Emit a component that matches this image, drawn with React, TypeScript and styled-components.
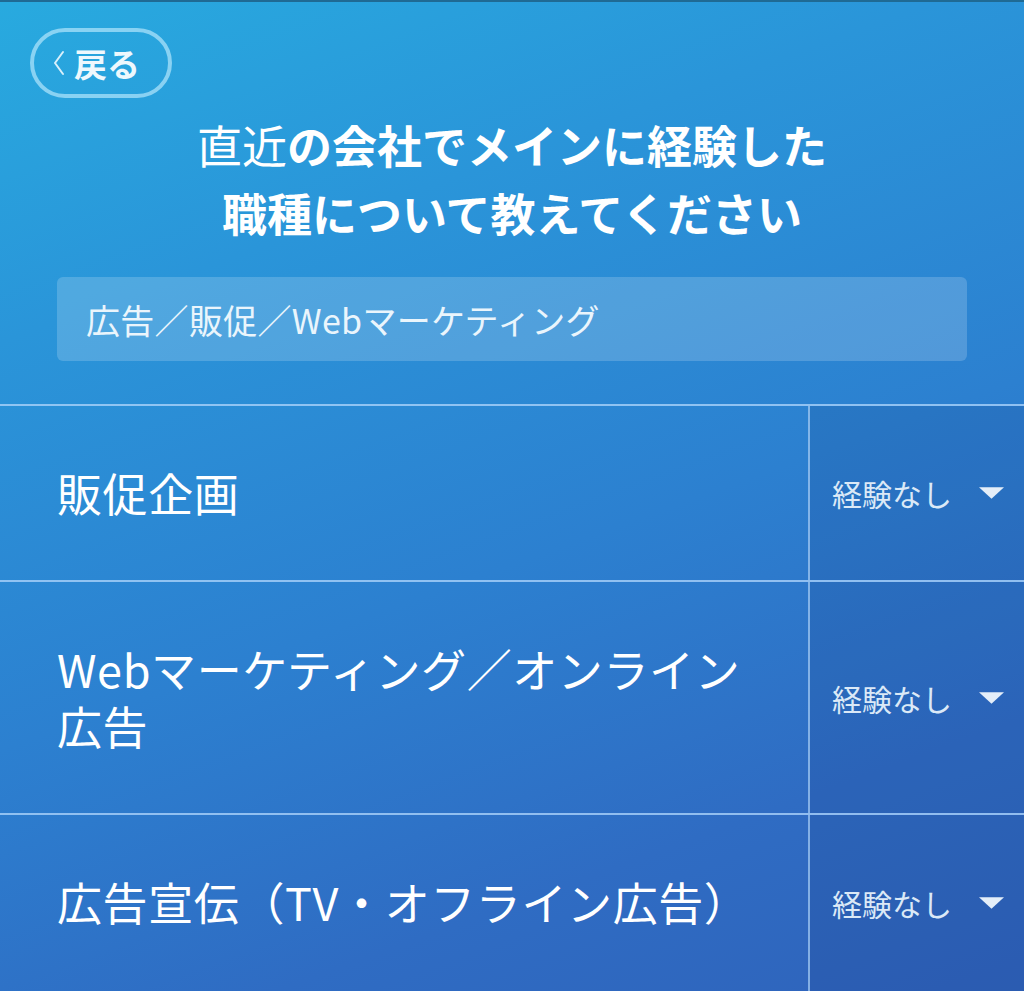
import styled, { createGlobalStyle } from 'styled-components'

const GlobalStyle = createGlobalStyle`
	html, body {
		margin: 0;
		padding: 0;
		background: #2d5fb8;
	}
	body {
		font-family: 'Noto Sans CJK JP', 'Noto Sans', sans-serif;
	}
`

const experiencias = [
	{ id: 1, nombre: '販促企画' },
	{ id: 2, nombre: 'Webマーケティング／オンライン広告' },
	{ id: 3, nombre: '広告宣伝（TV・オフライン広告）' },
]

export default function App() {
	return (
		<>
			<GlobalStyle />
			<Pagina>
				<Cabecera>
					<BotonVolver type='button'>
						<Chevron viewBox='0 0 14 28' aria-hidden>
							<path d='M11 3 L3 14 L11 25' />
						</Chevron>
						戻る
					</BotonVolver>
					<Titulo>
						<Ligero>直近</Ligero>の会社でメインに経験した
						<br />
						職種について教えてください
					</Titulo>
					<Categoria>広告／販促／Webマーケティング</Categoria>
				</Cabecera>

				<Lista>
					{experiencias.map(item => (
						<Fila key={item.id}>
							<Etiqueta>{item.nombre}</Etiqueta>
							<Selector>
								<span>経験なし</span>
								<Triangulo viewBox='0 0 26 12' aria-hidden>
									<path d='M0 0 H26 L13 12 Z' />
								</Triangulo>
							</Selector>
						</Fila>
					))}
				</Lista>
			</Pagina>
		</>
	)
}

const Pagina = styled.div`
	min-height: 991px;
	display: flex;
	flex-direction: column;
	border-top: 2px solid #1f6a94;
	box-sizing: border-box;
	background: linear-gradient(160deg, #28aadf 0%, #2a95d9 25%, #2c80d0 55%, #2f6cc3 80%, #2f63bb 100%);
	color: #fff;
	overflow: hidden;
`

const Cabecera = styled.header`
	display: flex;
	flex-direction: column;
	padding: 26px 57px 43px 57px;
`

const BotonVolver = styled.button`
	align-self: flex-start;
	display: flex;
	align-items: center;
	gap: 8px;
	margin-left: -27px;
	height: 70px;
	padding: 0 28px 0 18px;
	border: 4px solid rgba(170, 225, 250, 0.75);
	border-radius: 36px;
	background: transparent;
	color: #eef8fd;
	font-family: inherit;
	font-size: 33px;
	font-weight: 700;
	box-sizing: border-box;
	cursor: pointer;
`

const Chevron = styled.svg`
	width: 14px;
	height: 28px;
	fill: none;
	stroke: #d8f0fb;
	stroke-width: 2;
	stroke-linecap: round;
	stroke-linejoin: round;
`

const Titulo = styled.h1`
	margin: 13px 0 0;
	text-align: center;
	font-size: 45px;
	line-height: 68px;
	font-weight: 700;
	color: #fff;
`

const Ligero = styled.span`
	font-weight: 400;
`

const Categoria = styled.div`
	margin-top: 30px;
	height: 84px;
	display: flex;
	align-items: center;
	padding: 0 29px;
	border-radius: 6px;
	background: rgba(255, 255, 255, 0.18);
	font-size: 34px;
	letter-spacing: 0.3px;
	color: #eaf5fc;
`

const Lista = styled.div`
	flex: 1;
	display: flex;
	flex-direction: column;
`

const Fila = styled.div`
	display: grid;
	grid-template-columns: 808px 1fr;
	border-top: 2px solid rgba(170, 210, 250, 0.8);

	&:last-child {
		flex: 1;
	}
`

const Etiqueta = styled.div`
	padding: 58px 40px 59px 57px;
	font-size: 45px;
	letter-spacing: 0.6px;
	line-height: 57px;
	font-weight: 400;
	color: #fff;
`

const Selector = styled.div`
	display: flex;
	align-items: center;
	justify-content: space-between;
	padding: 0 20px 0 22px;
	border-left: 2px solid rgba(170, 210, 250, 0.7);
	background: rgba(20, 40, 110, 0.12);
	font-size: 30px;
	color: #dbe9f7;
`

const Triangulo = styled.svg`
	width: 25px;
	height: 12px;
	fill: #e4eef9;
`
